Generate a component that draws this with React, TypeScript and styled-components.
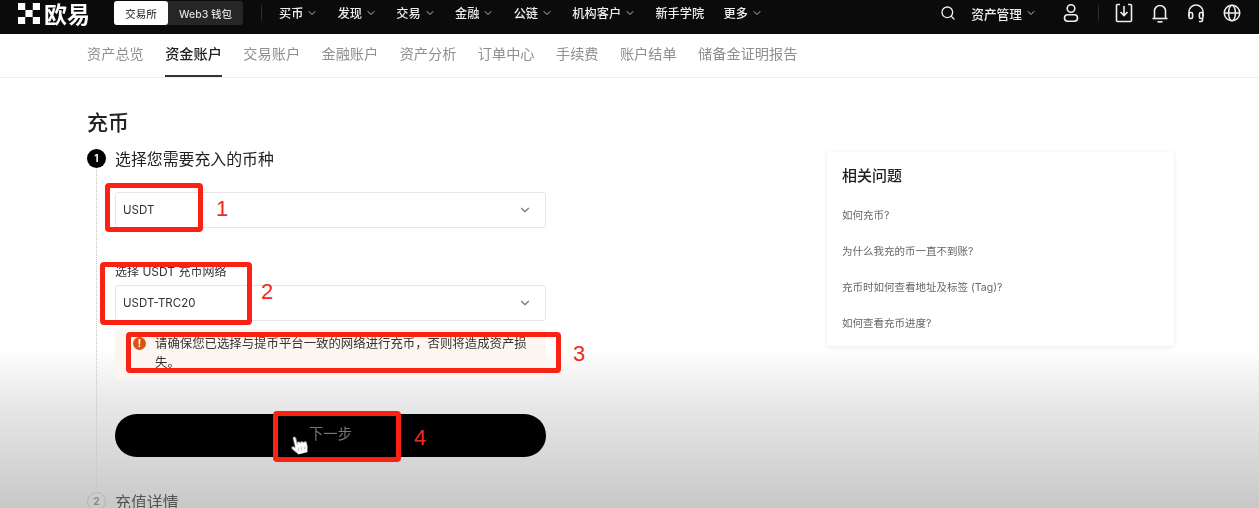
import styled, { createGlobalStyle } from "styled-components";
import { FaHandPointer } from "react-icons/fa";
import { LuChevronDown, LuSearch } from "react-icons/lu";

const GlobalStyle = createGlobalStyle`
	html, body { margin: 0; padding: 0; }
	body {
		font-family: "Inter", "Noto Sans CJK SC", sans-serif;
		background: #fff;
		overflow: hidden;
	}
`;

const Page = styled.div`
	position: relative;
	width: 1259px;
	height: 508px;
	overflow: hidden;
	background: linear-gradient(180deg, #fff 0, #fff 348px, #e9e9e9 400px, #c8c8c8 508px);
`;

const Header = styled.header`
	display: flex;
	align-items: center;
	height: 34px;
	box-sizing: border-box;
	padding: 0 18px 8px 18px;
	background: #0b0b0b;
	color: #eee;
	filter: blur(0.35px);
`;

const Brand = styled.div`
	display: flex;
	align-items: center;
	gap: 4px;
	width: 96px;
	font-size: 23px;
	font-weight: 700;
	color: #fff;
`;

const Switcher = styled.div`
	display: flex;
	align-items: center;
	flex: none;
	width: 129px;
	height: 24px;
	border-radius: 3px;
	background: #262626;
	font-size: 10.5px;
	font-weight: 500;
`;

const SwitchItem = styled.div<{ $active?: boolean }>`
	display: flex;
	align-items: center;
	justify-content: center;
	height: 100%;
	width: ${(p) => (p.$active ? "54px" : "75px")};
	border-radius: 3px;
	background: ${(p) => (p.$active ? "#fff" : "transparent")};
	color: ${(p) => (p.$active ? "#444" : "#ddd")};
`;

const Divider = styled.span`
	flex: none;
	width: 1px;
	height: 16px;
	background: #2c2c2c;
`;

const HeaderDivider = styled(Divider)`
	margin: 0 17px 0 18px;
`;

const Nav = styled.nav`
	display: flex;
	align-items: center;
	gap: 19.3px;
	font-size: 12.2px;
	font-weight: 500;
`;

const NavItem = styled.div`
	display: flex;
	align-items: center;
	gap: 3px;
	white-space: nowrap;
	svg { color: #bbb; }
`;

const HeaderRight = styled.div`
	display: flex;
	align-items: center;
	margin-left: auto;
	font-size: 12.7px;
	font-weight: 500;
`;

const IconSlot = styled.span<{ $gap?: number }>`
	display: flex;
	align-items: center;
	margin-left: ${(p) => p.$gap ?? 0}px;
`;

const Tabs = styled.div`
	display: flex;
	gap: 21.4px;
	height: 44px;
	box-sizing: border-box;
	padding-left: 87px;
	border-bottom: 1px solid #ececec;
	filter: blur(0.35px);
`;

const Tab = styled.div<{ $active?: boolean }>`
	display: flex;
	align-items: center;
	padding-bottom: 3px;
	height: 38px;
	font-size: 14.2px;
	font-weight: ${(p) => (p.$active ? 500 : 400)};
	color: ${(p) => (p.$active ? "#222" : "#8f8f8f")};
	border-bottom: 2px solid ${(p) => (p.$active ? "#333" : "transparent")};
`;

const Main = styled.main`
	display: flex;
	justify-content: space-between;
	padding: 30px 85px 0 87px;
	filter: blur(0.3px);
`;

const Left = styled.section`
	width: 459px;
`;

const Title = styled.h1`
	margin: 0 0 10px;
	font-size: 21px;
	line-height: 30px;
	font-weight: 500;
	color: #222;
`;

const StepHead = styled.div<{ $muted?: boolean }>`
	display: flex;
	align-items: center;
	gap: 9px;
	height: 20px;
	font-size: 15.9px;
	color: ${(p) => (p.$muted ? "#555" : "#222")};
`;

const StepDot = styled.span<{ $muted?: boolean }>`
	display: flex;
	flex: none;
	align-items: center;
	justify-content: center;
	width: 19px;
	height: 19px;
	box-sizing: border-box;
	border-radius: 50%;
	font-size: 10px;
	font-weight: 700;
	background: ${(p) => (p.$muted ? "transparent" : "#000")};
	color: ${(p) => (p.$muted ? "#888" : "#fff")};
	border: ${(p) => (p.$muted ? "1px solid #b4b4b4" : "none")};
`;

const StepBody = styled.div`
	height: 321px;
	margin: 1px 0 1px 9px;
	padding: 23px 0 0 18px;
	border-left: 1px dotted #c4c4c4;
	box-sizing: border-box;
`;

const Select = styled.div`
	display: flex;
	align-items: center;
	justify-content: space-between;
	height: 36px;
	box-sizing: border-box;
	padding: 0 13px 0 7px;
	background: #fff;
	border: 1px solid #e6e6e6;
	border-radius: 3px;
	font-size: 11.5px;
	color: #333;
	svg { color: #777; }
`;

const FieldLabel = styled.div`
	margin: 36px 0 5px;
	height: 16px;
	line-height: 16px;
	font-size: 12px;
	color: #333;
`;

const Alert = styled.div`
	display: flex;
	gap: 9px;
	margin-top: 8px;
	height: 50px;
	box-sizing: border-box;
	padding: 5px 16px 0 18px;
	background: #fdf5ef;
	border-radius: 3px;
	font-size: 12.4px;
	line-height: 19px;
	color: #333;
`;

const AlertIcon = styled.span`
	flex: none;
	display: flex;
	align-items: center;
	justify-content: center;
	width: 13px;
	height: 13px;
	margin-top: 3px;
	border-radius: 50%;
	background: #d9540f;
	color: #fff;
	font-size: 10px;
	font-weight: 700;
`;

const NextButton = styled.button`
	display: flex;
	align-items: center;
	justify-content: center;
	width: 100%;
	height: 43px;
	margin-top: 35px;
	padding: 0 0 6px;
	border: none;
	border-radius: 22px;
	background: #000;
	color: #777;
	font-family: inherit;
	font-size: 14.3px;
`;

const Card = styled.aside`
	width: 347px;
	height: 194px;
	margin-top: 44px;
	box-sizing: border-box;
	padding: 13px 15px;
	background: #fff;
	border-radius: 3px;
	box-shadow: 0 1px 5px rgba(0, 0, 0, 0.09);
`;

const CardTitle = styled.h2`
	margin: 0 0 21px;
	font-size: 15px;
	line-height: 22px;
	font-weight: 500;
	color: #222;
`;

const Question = styled.div`
	height: 36px;
	line-height: 16px;
	font-size: 10.5px;
	color: #666;
`;

const RedBox = styled.div<{ $left: number; $top: number; $width: number; $height: number }>`
	position: absolute;
	left: ${(p) => p.$left}px;
	top: ${(p) => p.$top}px;
	width: ${(p) => p.$width}px;
	height: ${(p) => p.$height}px;
	box-sizing: border-box;
	border: 5px solid #fa2213;
	border-radius: 4px;
`;

const RedNumber = styled.span<{ $left: number; $top: number }>`
	position: absolute;
	left: ${(p) => p.$left}px;
	top: ${(p) => p.$top}px;
	font-family: "Liberation Sans", sans-serif;
	font-size: 22px;
	line-height: 24px;
	color: #f0291c;
`;

const Pointer = styled.span`
	position: absolute;
	left: 290px;
	top: 436px;
	display: flex;
	color: #fff;
	transform: rotate(-14deg);
	filter: drop-shadow(0 0 1px #000);
`;

function Logo() {
	return (
		<svg width="22" height="21" viewBox="0 0 22 21" fill="#fff">
			<rect x="0" y="0" width="7.2" height="7" />
			<rect x="14.8" y="0" width="7.2" height="7" />
			<rect x="7.4" y="7" width="7.2" height="7" />
			<rect x="0" y="14" width="7.2" height="7" />
			<rect x="14.8" y="14" width="7.2" height="7" />
		</svg>
	);
}

function UserIcon() {
	return (
		<svg width="18" height="20" viewBox="0 0 18 20" fill="none" stroke="#eee" strokeWidth="1.6">
			<circle cx="9" cy="5.5" r="3.8" />
			<rect x="2.5" y="11.8" width="13" height="6.4" rx="3.2" />
		</svg>
	);
}

function DepositIcon() {
	return (
		<svg width="18" height="20" viewBox="0 0 18 20" fill="none" stroke="#eee" strokeWidth="1.6">
			<path d="M5 1.5H2.5a1 1 0 0 0-1 1v15a1 1 0 0 0 1 1h13a1 1 0 0 0 1-1v-15a1 1 0 0 0-1-1H13" />
			<path d="M9 3v9M5.5 9l3.5 3.5L12.5 9" />
		</svg>
	);
}

function BellIcon() {
	return (
		<svg width="18" height="20" viewBox="0 0 18 20" fill="none" stroke="#eee" strokeWidth="1.6">
			<path d="M3.5 15.5V8a5.5 5.5 0 0 1 11 0v7.5" />
			<path d="M1.5 15.5h15" />
			<path d="M6.5 18.8h5" />
		</svg>
	);
}

function HeadsetIcon() {
	return (
		<svg width="18" height="20" viewBox="0 0 18 20" fill="none" stroke="#eee" strokeWidth="1.6">
			<path d="M2 13V9a7 7 0 0 1 14 0v4" />
			<rect x="2" y="9.5" width="3.6" height="6" rx="1.4" />
			<rect x="12.4" y="9.5" width="3.6" height="6" rx="1.4" />
			<path d="M15.5 15.5v1.5a1.5 1.5 0 0 1-1.5 1.5h-2" />
		</svg>
	);
}

function GlobeIcon() {
	return (
		<svg width="18" height="20" viewBox="0 0 20 20" fill="none" stroke="#eee" strokeWidth="1.7">
			<circle cx="10" cy="10" r="8.6" />
			<ellipse cx="10" cy="10" rx="3.8" ry="8.6" />
			<path d="M1.4 10h17.2" />
		</svg>
	);
}

const navItems = [
	{ label: "买币", arrow: true },
	{ label: "发现", arrow: true },
	{ label: "交易", arrow: true },
	{ label: "金融", arrow: true },
	{ label: "公链", arrow: true },
	{ label: "机构客户", arrow: true },
	{ label: "新手学院", arrow: false },
	{ label: "更多", arrow: true },
];

const tabs = ["资产总览", "资金账户", "交易账户", "金融账户", "资产分析", "订单中心", "手续费", "账户结单", "储备金证明报告"];

const questions = ["如何充币?", "为什么我充的币一直不到账?", "充币时如何查看地址及标签 (Tag)?", "如何查看充币进度?"];

const boxes = [
	{ left: 105, top: 183, width: 98, height: 49 },
	{ left: 100, top: 262, width: 152, height: 63 },
	{ left: 126, top: 332, width: 435, height: 41 },
	{ left: 273, top: 411, width: 128, height: 51 },
];

const numbers = [
	{ label: "1", left: 216, top: 197 },
	{ label: "2", left: 261, top: 280 },
	{ label: "3", left: 573, top: 342 },
	{ label: "4", left: 414, top: 426 },
];

export default function App() {
	return (
		<Page>
			<GlobalStyle />
			<Header>
				<Brand>
					<Logo />
					<span>欧易</span>
				</Brand>
				<Switcher>
					<SwitchItem $active>交易所</SwitchItem>
					<SwitchItem>Web3 钱包</SwitchItem>
				</Switcher>
				<HeaderDivider />
				<Nav>
					{navItems.map((item) => (
						<NavItem key={item.label}>
							{item.label}
							{item.arrow && <LuChevronDown size={12} />}
						</NavItem>
					))}
				</Nav>
				<HeaderRight>
					<IconSlot><LuSearch size={16} /></IconSlot>
					<IconSlot $gap={15}>
						<NavItem>
							资产管理
							<LuChevronDown size={12} />
						</NavItem>
					</IconSlot>
					<IconSlot $gap={25}><UserIcon /></IconSlot>
					<IconSlot $gap={18}><Divider /></IconSlot>
					<IconSlot $gap={16}><DepositIcon /></IconSlot>
					<IconSlot $gap={18}><BellIcon /></IconSlot>
					<IconSlot $gap={18}><HeadsetIcon /></IconSlot>
					<IconSlot $gap={18}><GlobeIcon /></IconSlot>
				</HeaderRight>
			</Header>
			<Tabs>
				{tabs.map((tab) => (
					<Tab key={tab} $active={tab === "资金账户"}>{tab}</Tab>
				))}
			</Tabs>
			<Main>
				<Left>
					<Title>充币</Title>
					<StepHead>
						<StepDot>1</StepDot>
						选择您需要充入的币种
					</StepHead>
					<StepBody>
						<Select>
							USDT
							<LuChevronDown size={14} />
						</Select>
						<FieldLabel>选择 USDT 充币网络</FieldLabel>
						<Select>
							USDT-TRC20
							<LuChevronDown size={14} />
						</Select>
						<Alert>
							<AlertIcon>!</AlertIcon>
							<span>请确保您已选择与提币平台一致的网络进行充币，否则将造成资产损失。</span>
						</Alert>
						<NextButton>下一步</NextButton>
					</StepBody>
					<StepHead $muted>
						<StepDot $muted>2</StepDot>
						充值详情
					</StepHead>
				</Left>
				<Card>
					<CardTitle>相关问题</CardTitle>
					{questions.map((q) => (
						<Question key={q}>{q}</Question>
					))}
				</Card>
			</Main>
			{boxes.map((b) => (
				<RedBox key={b.left} $left={b.left} $top={b.top} $width={b.width} $height={b.height} />
			))}
			{numbers.map((n) => (
				<RedNumber key={n.label} $left={n.left} $top={n.top}>{n.label}</RedNumber>
			))}
			<Pointer><FaHandPointer size={18} /></Pointer>
		</Page>
	);
}
